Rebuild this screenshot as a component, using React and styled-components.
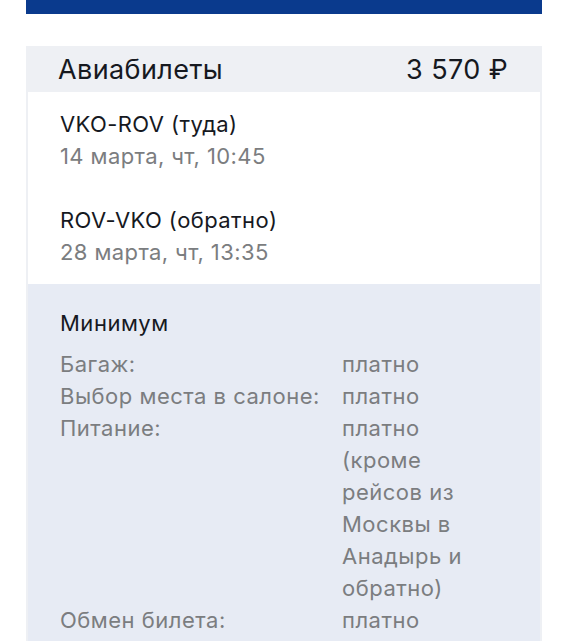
import React from 'react'
import styled, { createGlobalStyle } from 'styled-components'

const GlobalStyle = createGlobalStyle`
  body {
    margin: 0;
    background: #ffffff;
    font-family: Inter, "Noto Sans", "Liberation Sans", sans-serif;
    -webkit-font-smoothing: antialiased;
  }
`

const Page = styled.div`
  width: 568px;
  padding: 0 26px;
  box-sizing: border-box;
`

const TopBar = styled.div`
  height: 14px;
  background: #0a3a8d;
`

const Card = styled.div`
  margin-top: 32px;
  border: 2px solid #eef0f4;
  border-top: none;
  border-bottom: none;
`

const Header = styled.div`
  display: flex;
  justify-content: space-between;
  align-items: center;
  height: 46px;
  padding: 0 34px 0 32px;
  margin: 0 -2px;
  background: #eef0f4;
  color: #16191f;
  font-size: 27px;
  letter-spacing: 0.4px;
`

const Flights = styled.div`
  background: #ffffff;
  padding: 16px 32px;
  display: flex;
  flex-direction: column;
  gap: 32px;
`

const Leg = styled.div`
  display: flex;
  flex-direction: column;
  font-size: 22px;
  line-height: 32px;
  letter-spacing: 0.4px;
`

const Route = styled.div`
  color: #16191f;
`

const When = styled.div`
  color: #7b7d80;
`

const Tariff = styled.div`
  background: #e7ebf4;
  padding: 23px 32px 40px;
  font-size: 22px;
  line-height: 32px;
  letter-spacing: 0.5px;
`

const TariffName = styled.div`
  color: #16191f;
  margin-bottom: 9px;
`

const Terms = styled.div`
  display: grid;
  grid-template-columns: 282px 136px;
  color: #7b7d80;
`

const Term = styled.div``

const flights = [
  { route: 'VKO-ROV (туда)', when: '14 марта, чт, 10:45' },
  { route: 'ROV-VKO (обратно)', when: '28 марта, чт, 13:35' },
]

const terms = [
  ['Багаж:', 'платно'],
  ['Выбор места в салоне:', 'платно'],
  ['Питание:', 'платно (кроме рейсов из Москвы в Анадырь и обратно)'],
  ['Обмен билета:', 'платно'],
]

export default function App() {
  return (
    <>
      <GlobalStyle />
      <Page>
        <TopBar />
        <Card>
          <Header>
            <span>Авиабилеты</span>
            <span>3 570 ₽</span>
          </Header>
          <Flights>
            {flights.map((f) => (
              <Leg key={f.route}>
                <Route>{f.route}</Route>
                <When>{f.when}</When>
              </Leg>
            ))}
          </Flights>
          <Tariff>
            <TariffName>Минимум</TariffName>
            <Terms>
              {terms.map(([k, v]) => (
                <React.Fragment key={k}>
                  <Term>{k}</Term>
                  <Term>{v}</Term>
                </React.Fragment>
              ))}
            </Terms>
          </Tariff>
        </Card>
      </Page>
    </>
  )
}
